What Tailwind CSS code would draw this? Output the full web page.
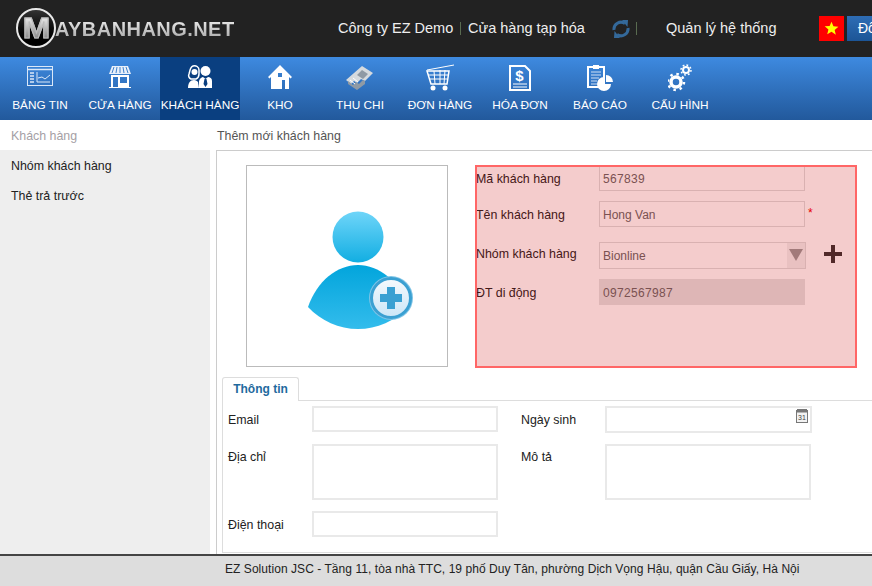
<!DOCTYPE html>
<html lang="en">
<head>
  <meta charset="UTF-8" />
  <title>Thêm mới khách hàng</title>
  <script src="https://cdn.jsdelivr.net/npm/@tailwindcss/browser@4"></script>
</head>
<body class="w-[872px] h-[586px] overflow-hidden bg-white font-['Liberation_Sans',Arial,sans-serif] text-[12.4px] text-[#222]">
  <!-- top bar -->
  <header class="h-[57px] bg-[#222] flex items-center text-white overflow-hidden">
    <div class="w-[40px] h-[40px] ml-[16px] mt-[-2px] rounded-full border-2 border-[#e8e8e8] bg-gradient-to-b from-[#333] to-black flex items-center justify-center overflow-hidden shrink-0">
      <span class="text-[30px] leading-none font-bold scale-x-110 bg-gradient-to-b from-white to-[#777] bg-clip-text text-transparent [-webkit-text-stroke:1px_#bbb]">M</span>
    </div>
    <span class="ml-[-1px] w-[181px] shrink-0 text-[20px] font-bold tracking-[0.45px] whitespace-nowrap bg-gradient-to-b from-white to-[#999] bg-clip-text text-transparent">AYBANHANG.NET</span>
    <span class="ml-[102px] mt-[1px] w-[116px] shrink-0 text-[14.5px] whitespace-nowrap text-[#eee]">Công ty EZ Demo</span>
    <span class="ml-[6px] w-px h-[13px] shrink-0 bg-[#596b50]"></span>
    <span class="ml-[7px] mt-[1px] w-[117px] shrink-0 text-[14.5px] whitespace-nowrap text-[#eee]">Cửa hàng tạp hóa</span>
    <svg class="ml-[27px] w-[18px] h-[20px] shrink-0" viewBox="0 0 18 20" fill="none" stroke="#34699a" stroke-width="3">
      <path d="M2 11 A7 7 0 0 1 13 4.500" />
      <path d="M16 9 A7 7 0 0 1 5 15.500" />
      <path d="M10 1 L16 1 L15.500 8 Z" fill="#34699a" stroke="none" />
      <path d="M8 19 L2 19 L2.500 12 Z" fill="#34699a" stroke="none" />
    </svg>
    <span class="ml-[6px] w-px h-[13px] shrink-0 bg-[#596b50]"></span>
    <span class="ml-[29px] mt-[1px] w-[110px] shrink-0 text-[14.5px] whitespace-nowrap text-[#eee]">Quản lý hệ thống</span>
    <div class="ml-[43px] w-[25px] h-[25px] bg-[#f00] flex items-center justify-center shrink-0">
      <svg class="w-[15px] h-[15px]" viewBox="0 0 20 20"><path fill="#ff0" d="M10 1l2.600 6.100 6.600.5-5 4.300 1.600 6.400L10 14.400l-5.700 3.400 1.600-6.400-5-4.300 6.600-.5z"/></svg>
    </div>
    <div class="ml-[3px] w-[60px] h-[25px] shrink-0 bg-gradient-to-b from-[#2e6db5] to-[#1c5596] text-[14px] pl-[11px] leading-[25px] whitespace-nowrap">Đổi</div>
  </header>

  <!-- main nav -->
  <nav class="h-[63px] flex bg-gradient-to-b from-[#3e8ae0] to-[#22599c] text-white text-[11.8px]">
    <a class="w-[80px] flex flex-col items-center">
      <svg class="mt-[7px] w-[28px] h-[28px]" viewBox="0 0 28 28" fill="none" stroke="#dbe8f8">
        <rect x="1.500" y="2.500" width="25" height="19" stroke-width="1"/>
        <path d="M2 5.500h24" stroke-width="1.500"/>
        <path d="M4 9h4M4 12h4M4 15h4M4 18h4" stroke-width="1.500"/>
        <path d="M11 8v10h13M12 14l4-1 3 2 5-4" stroke-width="1"/>
      </svg>
      <span class="whitespace-nowrap mt-[5px]">BẢNG TIN</span>
    </a>
    <a class="w-[80px] flex flex-col items-center">
      <svg class="mt-[7px] w-[28px] h-[28px]" viewBox="0 0 28 28">
        <path fill="#e8f0fa" d="M6 2h16l3 8H3z"/>
        <path stroke="#3d80cc" stroke-width="1" d="M8 3l-2 6M11 3l-1 6M14 3v6M17 3l1 6M20 3l2 6"/>
        <path fill="#fff" fill-rule="evenodd" d="M5 11h18v12h2v1H3v-1h2zM7 13v10h5V13zM14 13v6h7v-6z"/>
      </svg>
      <span class="whitespace-nowrap mt-[5px]">CỬA HÀNG</span>
    </a>
    <a class="w-[80px] flex flex-col items-center bg-[#0a3f80]">
      <svg class="mt-[7px] w-[28px] h-[28px]" viewBox="0 0 28 28" fill="#fff">
        <path fill="none" stroke="#fff" stroke-width="1.500" d="M7 2c3-1 6 1 6 4v4c0 2-1 4-3 5H5c-2-1-3-3-2-5 1-3 1-7 4-8z"/>
        <circle cx="8.500" cy="8" r="3"/>
        <path d="M2 24c0-5 2-8 6-8 2 0 3 1 4 2l1 6z"/>
        <circle cx="19.500" cy="7" r="5"/>
        <path fill-rule="evenodd" d="M13 17c1-3 3-4 4-4l2.500 2 2.500-2c2 0 4 1 4 4v7H13zM18.500 15l-1 5 2 3 2-3-1-5z"/>
      </svg>
      <span class="whitespace-nowrap mt-[5px]">KHÁCH HÀNG</span>
    </a>
    <a class="w-[80px] flex flex-col items-center">
      <svg class="mt-[7px] w-[28px] h-[28px]" viewBox="0 0 28 28">
        <path fill="#fff" fill-rule="evenodd" d="M14 1l12 12-1.500 1.500L23 13v12H5V13l-1.500 1.500L2 13zM12 9v4h4V9zM16 16v9h3v-9z"/>
      </svg>
      <span class="whitespace-nowrap mt-[5px]">KHO</span>
    </a>
    <a class="w-[80px] flex flex-col items-center">
      <svg class="mt-[7px] w-[32px] h-[28px]" viewBox="0 0 32 28">
        <path fill="#d5dade" d="M18 2l11 7-8 8-4-2-4 4-3-2-3 3-5-4z"/>
        <path fill="#8f9aa5" d="M18 6l6 4-5 5-6-4zM4 17l5 4 3-3 3 2 4-4 2 1v3l-8 6-9-6z"/>
        <path stroke="#fff" stroke-width="1" d="M9 14l5 4M6 16l5 4"/>
      </svg>
      <span class="whitespace-nowrap mt-[5px]">THU CHI</span>
    </a>
    <a class="w-[80px] flex flex-col items-center">
      <svg class="mt-[7px] w-[30px] h-[28px]" viewBox="0 0 30 28" fill="none" stroke="#fff">
        <path d="M2 6l27-5" stroke-width="1"/>
        <path d="M2 7h22l-2 13H6z" stroke-width="1.500"/>
        <path d="M3 11h20M4 15h18M9 7l1 13M15 6v14M20 6l-1 14" stroke-width="1"/>
        <circle cx="8" cy="24" r="2.500" fill="#fff" stroke="none"/>
        <circle cx="20" cy="24" r="2.500" fill="#fff" stroke="none"/>
      </svg>
      <span class="whitespace-nowrap mt-[5px]">ĐƠN HÀNG</span>
    </a>
    <a class="w-[80px] flex flex-col items-center">
      <svg class="mt-[7px] w-[24px] h-[28px]" viewBox="0 0 24 28">
        <path fill="none" stroke="#fff" stroke-width="2" d="M2 2h15l5 5v19H2z"/>
        <text x="11.500" y="17" text-anchor="middle" font-size="15" font-weight="bold" fill="#fff" font-family="Liberation Sans">$</text>
        <path stroke="#fff" d="M5 20h14M5 23h14"/>
      </svg>
      <span class="whitespace-nowrap mt-[5px]">HÓA ĐƠN</span>
    </a>
    <a class="w-[80px] flex flex-col items-center">
      <svg class="mt-[7px] w-[28px] h-[28px]" viewBox="0 0 28 28">
        <path fill="none" stroke="#fff" stroke-width="2" d="M2 3h16v20H2z"/>
        <path fill="#fff" d="M7 1h6v4H7z"/>
        <path stroke="#cfe0f5" stroke-width="1" d="M5 8h10M5 11h10M5 14h8M5 17h6M5 20h6"/>
        <path fill="#fff" d="M18 13a7 7 0 1 0 7 7h-7z"/>
        <path fill="#fff" d="M20 11a7 7 0 0 1 7 7h-7z"/>
      </svg>
      <span class="whitespace-nowrap mt-[5px]">BÁO CÁO</span>
    </a>
    <a class="w-[80px] flex flex-col items-center">
      <svg class="mt-[7px] w-[24px] h-[28px]" viewBox="0 0 24 28" fill="none" stroke="#fff">
        <circle cx="8" cy="18" r="5" stroke-width="3.500"/>
        <circle cx="8" cy="18" r="8" stroke-width="2.500" stroke-dasharray="2.500 3.800"/>
        <circle cx="18" cy="6" r="3" stroke-width="2"/>
        <circle cx="18" cy="6" r="5" stroke-width="1.500" stroke-dasharray="1.800 2.100"/>
      </svg>
      <span class="whitespace-nowrap mt-[5px]">CẤU HÌNH</span>
    </a>
  </nav>

  <div class="flex h-[434px]">
    <!-- sidebar -->
    <aside class="w-[210px] shrink-0 flex flex-col">
      <div class="h-[30px] pl-[11px] leading-[33px] text-[#a59fa5]">Khách hàng</div>
      <div class="flex-1 bg-[#eee]">
        <div class="h-[30px] pl-[11px] leading-[33px]">Nhóm khách hàng</div>
        <div class="h-[30px] pl-[11px] leading-[33px]">Thẻ trả trước</div>
      </div>
    </aside>

    <!-- content -->
    <main class="flex-1 min-w-0 pl-[6px] flex flex-col">
      <div class="h-[30px] pl-px leading-[33px] text-[#555]">Thêm mới khách hàng</div>
      <div class="flex-1 border-t border-l border-[#ccc]">
        <div class="flex pt-[14px] pl-[29px]">
          <div class="w-[202px] h-[202px] border border-[#bbb] relative shrink-0">
            <svg class="absolute left-[60px] top-[45px]" width="108" height="120" viewBox="0 0 108 120">
              <defs>
                <linearGradient id="head" x1="0" y1="0" x2="0" y2="1"><stop offset="0" stop-color="#6fd5f9"/><stop offset="1" stop-color="#12aee2"/></linearGradient>
                <linearGradient id="body" x1="0" y1="0" x2="0" y2="1"><stop offset="0" stop-color="#02a5dc"/><stop offset="1" stop-color="#33bcec"/></linearGradient>
                <linearGradient id="badge" x1="0" y1="0" x2="0" y2="1"><stop offset="0" stop-color="#f5fafd"/><stop offset="1" stop-color="#cbe6f7"/></linearGradient>
              </defs>
              <circle cx="51" cy="26" r="25.500" fill="url(#head)"/>
              <path fill="url(#body)" d="M1 96C10 70 30 54 51 54s41 16 51 42C88 110 70 118 51 118S14 110 1 96z"/>
              <circle cx="84" cy="87" r="22" fill="#7fc4e6"/>
              <circle cx="84" cy="87" r="19.500" fill="url(#badge)" stroke="#3aa0d2" stroke-width="3"/>
              <path fill="#3aa0d2" d="M80 76h8v7h7v8h-7v7h-8v-7h-7v-8h7z"/>
            </svg>
          </div>

          <div class="ml-[27px] w-[382px] h-[203px] relative shrink-0">
            <div class="pl-[1px]">
              <div class="flex items-center h-[26px] mb-[10px]">
                <label class="w-[123px] mt-[3px]">Mã khách hàng</label>
                <input class="w-[206px] h-[26px] border border-[#ddd] px-[3px] pt-[2px] text-[12px] tracking-[0.33px] text-[#666]" value="567839" />
              </div>
              <div class="flex items-center h-[26px] mb-[15px]">
                <label class="w-[123px] mt-[3px]">Tên khách hàng</label>
                <input class="w-[206px] h-[26px] border border-[#ddd] px-[3px] pt-[2px] text-[12px] text-[#666]" value="Hong Van" />
                <span class="ml-[3px] mt-[-3px] text-[#e00] text-[12px]">*</span>
              </div>
              <div class="flex items-center h-[27px] mb-[10px]">
                <label class="w-[123px] mt-[-2px]">Nhóm khách hàng</label>
                <div class="w-[207px] h-[27px] border border-[#ddd] pl-[3px] flex items-center text-[12px] text-[#666]">
                  <span class="flex-1">Bionline</span>
                  <span class="w-[18px] h-[25px] bg-[#f1f1f1] flex items-center justify-center">
                    <svg class="mt-[-2px]" width="14" height="12" viewBox="0 0 14 12"><path fill="#999" d="M0 0h14l-7 12z"/></svg>
                  </span>
                </div>
                <svg class="ml-[18px] mt-[-3px]" width="18" height="18" viewBox="0 0 18 18"><path fill="#333" d="M7 0h4v7h7v4h-7v7H7v-7H0V7h7z"/></svg>
              </div>
              <div class="flex items-center h-[26px]">
                <label class="w-[123px] mt-[3px]">ĐT di động</label>
                <input disabled class="w-[206px] h-[26px] bg-[#e4e4e4] px-[4px] pt-[2px] text-[12px] tracking-[0.33px] text-[#666]" value="0972567987" />
              </div>
            </div>
            <!-- red highlight lying over the form -->
            <div class="absolute inset-0 border-2 border-[#f66] bg-[#c80000]/20 pointer-events-none"></div>
          </div>
        </div>

        <!-- tab -->
        <div class="mt-[9px] ml-[5px] flex h-[24px]">
          <div class="w-[77px] h-[24px] border border-b-0 border-[#ddd] rounded-t-[3px] bg-white text-[12px] font-bold text-[#1f6a9e] text-center leading-[23px] relative z-10">Thông tin</div>
          <div class="flex-1 border-b border-[#ddd]"></div>
        </div>
        <div class="ml-[5px] h-[152px] border-l border-b border-[#ddd] pl-[5px] pt-[5px] grid grid-cols-[84px_186px_107px_207px] grid-rows-[26px_56px_26px] gap-y-[12px] content-start">
          <label class="leading-[29px]">Email</label>
          <input class="h-[26px] border-2 border-[#e9e9e9]" />
          <label class="pl-[23px] leading-[29px]">Ngày sinh</label>
          <div class="h-[27px] border-2 border-[#e9e9e9] relative">
            <svg class="absolute right-[2px] top-[1px]" width="12" height="14" viewBox="0 0 12 14">
              <rect x="0.500" y="1.500" width="11" height="12" fill="#f2f2f2" stroke="#777"/>
              <rect x="1" y="0" width="10" height="3.500" fill="#777"/>
              <text x="6" y="11" text-anchor="middle" font-size="7" fill="#444" font-family="Liberation Sans">31</text>
            </svg>
          </div>
          <label class="leading-[27px]">Địa chỉ</label>
          <textarea class="h-[56px] border-2 border-[#e9e9e9] resize-none"></textarea>
          <label class="pl-[23px] leading-[27px]">Mô tả</label>
          <textarea class="w-[206px] h-[56px] border-2 border-[#e9e9e9] resize-none"></textarea>
          <label class="leading-[27px]">Điện thoại</label>
          <input class="h-[26px] mt-[-1px] border-2 border-[#e9e9e9]" />
        </div>
      </div>
    </main>
  </div>

  <footer class="h-[32px] border-t-[2px] border-[#444] bg-[#ddd] pl-[225px] leading-[26px] whitespace-nowrap text-[12px] tracking-[0.055px] text-[#222]">EZ Solution JSC - Tầng 11, tòa nhà TTC, 19 phố Duy Tân, phường Dịch Vọng Hậu, quận Cầu Giấy, Hà Nội</footer>
</body>
</html>
